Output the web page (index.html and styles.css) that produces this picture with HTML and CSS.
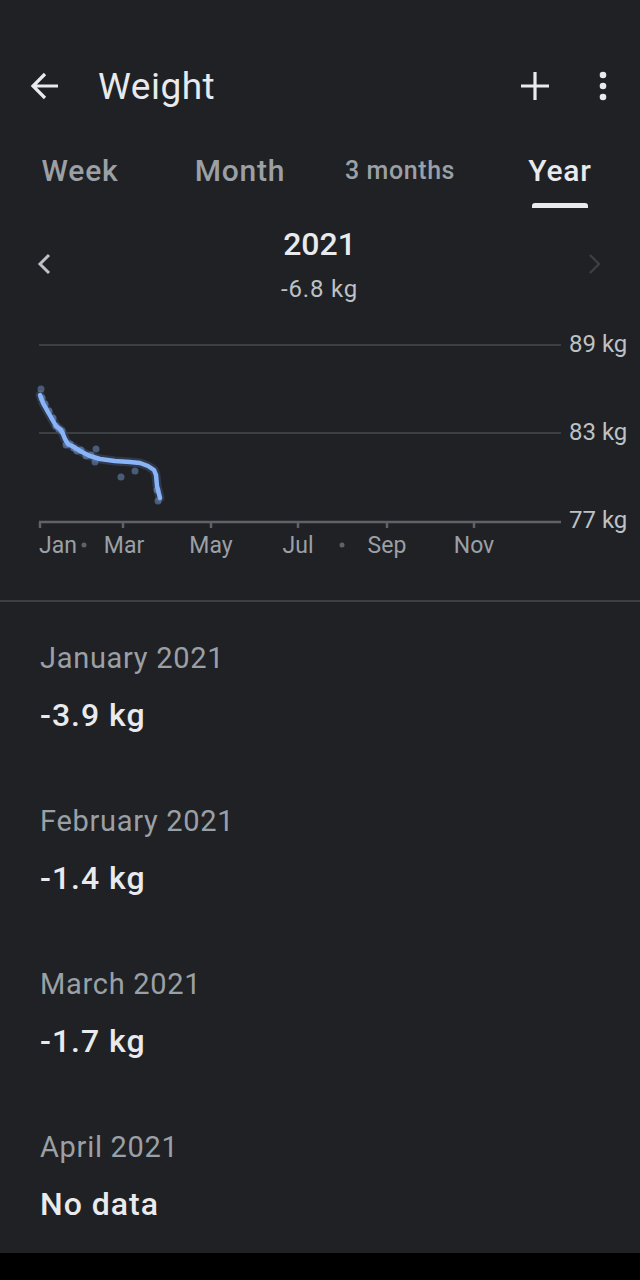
FILE: index.html
```html
<!DOCTYPE html>
<html lang="en">
<head>
<meta charset="utf-8">
<title>Weight</title>
<link rel="stylesheet" href="styles.css">
</head>
<body>
<div class="screen">
  <main class="main">
    <header class="appbar">
      <button class="icon-btn back" aria-label="Back">
        <svg width="40" height="40" viewBox="0 0 40 40"><path d="M32 20H8M19 8L7 20l12 12" fill="none" stroke="#e8eaed" stroke-width="3.2" stroke-linecap="butt"/></svg>
      </button>
      <h1 class="title">Weight</h1>
      <div class="actions">
        <button class="icon-btn" aria-label="Add">
          <svg width="40" height="40" viewBox="0 0 40 40"><path d="M20 6v28M6 20h28" stroke="#e8eaed" stroke-width="3.2"/></svg>
        </button>
        <button class="icon-btn" aria-label="More">
          <svg width="40" height="40" viewBox="0 0 40 40"><circle cx="20" cy="9" r="3.3" fill="#e8eaed"/><circle cx="20" cy="20" r="3.3" fill="#e8eaed"/><circle cx="20" cy="31" r="3.3" fill="#e8eaed"/></svg>
        </button>
      </div>
    </header>

    <nav class="tabs">
      <div class="tab"><span class="tab-label">Week</span><span class="indicator"></span></div>
      <div class="tab"><span class="tab-label">Month</span><span class="indicator"></span></div>
      <div class="tab"><span class="tab-label small">3 months</span><span class="indicator"></span></div>
      <div class="tab active"><span class="tab-label">Year</span><span class="indicator"></span></div>
    </nav>

    <section class="period">
      <span class="chev">
        <svg width="20" height="24" viewBox="0 0 20 24"><path d="M14 3L5 12l9 9" fill="none" stroke="#bdc1c6" stroke-width="3"/></svg>
      </span>
      <div class="period-center">
        <div class="period-year">2021</div>
        <div class="period-change">-6.8 kg</div>
      </div>
      <span class="chev dim">
        <svg width="20" height="24" viewBox="0 0 20 24"><path d="M6 3l9 9-9 9" fill="none" stroke="#3c4043" stroke-width="2.4"/></svg>
      </span>
    </section>

    <section class="chart">
      <svg width="640" height="280" viewBox="0 320 640 280">
        <g stroke="#3c4043" stroke-width="2">
          <line x1="39" y1="345" x2="561" y2="345"/>
          <line x1="39" y1="433" x2="561" y2="433"/>
        </g>
        <g stroke="#5f6368" stroke-width="2.5">
          <line x1="39" y1="522" x2="561" y2="522"/>
          <line x1="40" y1="522" x2="40" y2="528"/>
          <line x1="123" y1="522" x2="123" y2="528"/>
          <line x1="211" y1="522" x2="211" y2="528"/>
          <line x1="298" y1="522" x2="298" y2="528"/>
          <line x1="387" y1="522" x2="387" y2="528"/>
          <line x1="474" y1="522" x2="474" y2="528"/>
        </g>
        <g class="ylabel">
          <text x="569" y="352">89 kg</text>
          <text x="569" y="440">83 kg</text>
          <text x="569" y="528">77 kg</text>
        </g>
        <g class="xlabel">
          <text x="39" y="553">Jan</text>
          <text x="124" y="553" text-anchor="middle">Mar</text>
          <text x="211" y="553" text-anchor="middle">May</text>
          <text x="298" y="553" text-anchor="middle">Jul</text>
          <text x="387" y="553" text-anchor="middle">Sep</text>
          <text x="474" y="553" text-anchor="middle">Nov</text>
        </g>
        <circle cx="84" cy="545" r="2.5" fill="#5f6368"/>
        <circle cx="342" cy="545" r="2.5" fill="#5f6368"/>
        <path d="M40 395 L43 403 L48 412 L52 419 L56 426 L61 430 L63 434 L65 439 L68 444 L72 446 L77 449 L82 452 L90 456 L100 459 L115 461 L130 462 L140 463 L148 466 L154 470 L156 475 L157 486 L159 494 L160 498" fill="none" stroke="#3a4a66" stroke-width="9" stroke-linecap="round" stroke-linejoin="round" stroke-opacity="0.6"/>
        <g fill="#8ab4f8" fill-opacity="0.4">
          <circle cx="41" cy="389" r="3.5"/>
          <circle cx="42" cy="398" r="3.5"/>
          <circle cx="45" cy="404" r="3.5"/>
          <circle cx="49" cy="411" r="3.5"/>
          <circle cx="53" cy="418" r="3.5"/>
          <circle cx="56" cy="426" r="3.5"/>
          <circle cx="59" cy="429" r="3.5"/>
          <circle cx="62" cy="431" r="3.5"/>
          <circle cx="66" cy="445" r="3.5"/>
          <circle cx="70" cy="444" r="3.5"/>
          <circle cx="74" cy="448" r="3.5"/>
          <circle cx="77" cy="451" r="3.5"/>
          <circle cx="81" cy="450" r="3.5"/>
          <circle cx="86" cy="456" r="3.5"/>
          <circle cx="91" cy="455" r="3.5"/>
          <circle cx="96" cy="449" r="3.5"/>
          <circle cx="95" cy="462" r="3.5"/>
          <circle cx="121" cy="477" r="3.5"/>
          <circle cx="135" cy="471" r="3.5"/>
          <circle cx="157" cy="490" r="3.5"/>
          <circle cx="158" cy="501" r="3.5"/>
        </g>
        <path d="M40 395 L43 403 L48 412 L52 419 L56 426 L61 430 L63 434 L65 439 L68 444 L72 446 L77 449 L82 452 L90 456 L100 459 L115 461 L130 462 L140 463 L148 466 L154 470 L156 475 L157 486 L159 494 L160 498" fill="none" stroke="#8ab4f8" stroke-width="4.5" stroke-linecap="round" stroke-linejoin="round"/>
      </svg>
    </section>

    <div class="divider"></div>

    <ul class="months">
      <li class="month"><div class="month-name">January 2021</div><div class="month-value">-3.9 kg</div></li>
      <li class="month"><div class="month-name">February 2021</div><div class="month-value">-1.4 kg</div></li>
      <li class="month"><div class="month-name">March 2021</div><div class="month-value">-1.7 kg</div></li>
      <li class="month"><div class="month-name">April 2021</div><div class="month-value">No data</div></li>
    </ul>
  </main>
  <div class="navbar"></div>
</div>
</body>
</html>
```
FILE: styles.css
```css
* { box-sizing: border-box; }
html, body { margin: 0; padding: 0; }
body {
  background: #202124;
  font-family: Roboto, "Liberation Sans", sans-serif;
  color: #e8eaed;
}
.screen {
  height: 1280px;
  display: flex;
  flex-direction: column;
}
.main { flex: 1; overflow: hidden; }
.navbar { height: 27px; background: #000; }

button.icon-btn {
  background: none;
  border: 0;
  padding: 0;
  width: 40px;
  height: 40px;
  display: flex;
  align-items: center;
  justify-content: center;
}
.appbar {
  margin-top: 62px;
  height: 48px;
  display: flex;
  align-items: center;
  padding: 0 17px 0 26px;
}
.title {
  margin: 0 0 0 32px;
  font-size: 37px;
  font-weight: 400;
  letter-spacing: 0.5px;
  flex: 1;
}
.actions { display: flex; gap: 28px; }

.tabs {
  display: grid;
  grid-template-columns: repeat(4, 160px);
  height: 98px;
}
.tab {
  display: flex;
  flex-direction: column;
  align-items: center;
  padding-top: 45px;
}
.tab-label {
  font-size: 30px;
  line-height: 32px;
  color: #9aa0a6;
  font-weight: 500;
  letter-spacing: 0.8px;
}
.tab-label.small { font-size: 25px; letter-spacing: 0.6px; }
.indicator {
  margin-top: 16px;
  width: 56px;
  height: 5px;
  border-radius: 3px 3px 0 0;
}
.tab.active .tab-label { color: #e8eaed; }
.tab.active .indicator { background: #e8eaed; }

.period {
  display: flex;
  align-items: center;
  justify-content: space-between;
  padding: 18px 36px 18px 35px;
}
.period-center { display: flex; flex-direction: column; align-items: center; gap: 14px; }
.period-year { font-size: 32px; line-height: 36px; font-weight: 500; }
.period-change { font-size: 24px; line-height: 26px; color: #bdc1c6; letter-spacing: 0.8px; }
.chev { display: flex; margin-top: 0; }

.chart { height: 280px; }
.chart svg { display: block; }
.ylabel text { font-family: Roboto, "Liberation Sans", sans-serif; font-size: 24px; fill: #bdc1c6; }
.xlabel text { font-family: Roboto, "Liberation Sans", sans-serif; font-size: 23px; fill: #9aa0a6; }

.divider { height: 2px; background: #3c4043; }

.months { list-style: none; margin: 0; padding: 40px 0 0 40px; display: flex; flex-direction: column; gap: 72px; }
.month { display: flex; flex-direction: column; gap: 23px; }
.month-name { font-size: 29px; line-height: 32px; color: #9aa0a6; letter-spacing: 0.7px; }
.month-value { font-size: 32px; line-height: 36px; font-weight: 500; color: #e8eaed; letter-spacing: 1px; }
```
